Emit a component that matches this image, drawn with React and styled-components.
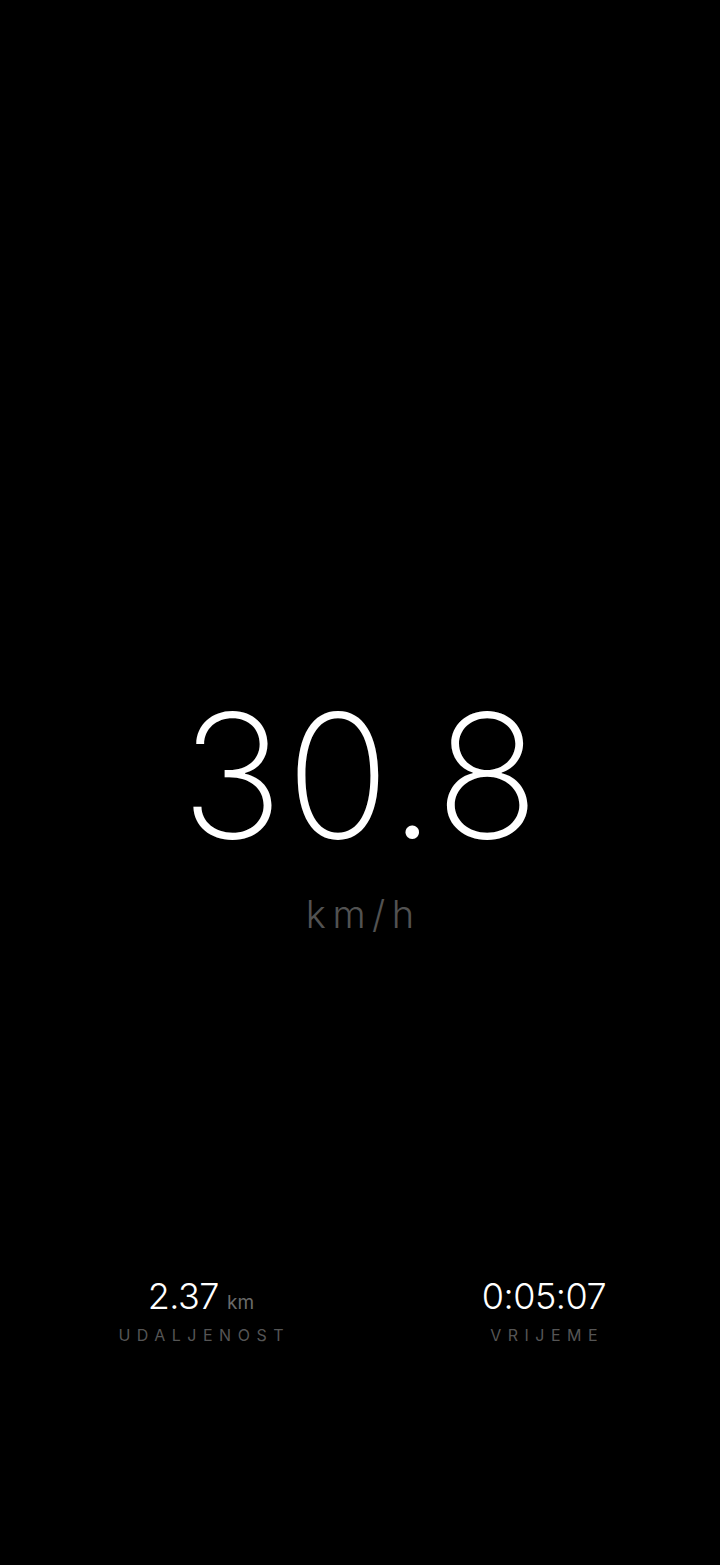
import React from "react";
import styled, { createGlobalStyle } from "styled-components";

const GlobalStyle = createGlobalStyle`
  html, body {
    margin: 0;
    padding: 0;
    background: #000;
  }
  body {
    font-family: "Inter", "Roboto", "Liberation Sans", sans-serif;
    -webkit-font-smoothing: antialiased;
  }
`;

const Screen = styled.div`
  width: 720px;
  height: 1565px;
  background: #000;
  color: #fff;
  display: flex;
  flex-direction: column;
  align-items: stretch;
  box-sizing: border-box;
  padding-top: 689px;
`;

const SpeedBlock = styled.div`
  display: flex;
  flex-direction: column;
  align-items: center;
`;

const Speed = styled.div`
  font-size: 172px;
  line-height: 172px;
  font-weight: 200;
  letter-spacing: 3px;
  padding-left: 3px;
  color: #fff;
`;

const SpeedUnit = styled.div`
  margin-top: 31px;
  font-size: 38px;
  line-height: 44px;
  font-weight: 300;
  letter-spacing: 6.5px;
  padding-left: 6.5px;
  color: #525252;
`;

const Stats = styled.div`
  margin-top: 338px;
  display: flex;
  justify-content: space-around;
  align-items: flex-start;
  padding: 0 18px 0 16px;
`;

const Stat = styled.div`
  display: flex;
  flex-direction: column;
  align-items: center;
`;

const Value = styled.div`
  height: 44px;
  font-size: 36px;
  line-height: 44px;
  font-weight: 300;
  letter-spacing: -0.5px;
  color: #fff;
  white-space: nowrap;
`;

const Unit = styled.span`
  font-size: 19px;
  font-weight: 400;
  letter-spacing: 0;
  color: #6a6a6a;
  margin-left: 8px;
`;

const Label = styled.div`
  margin-top: 7px;
  font-size: 16px;
  line-height: 20px;
  font-weight: 400;
  letter-spacing: 6.5px;
  padding-left: 6.5px;
  color: #555;
`;

export default function App() {
  return (
    <>
      <GlobalStyle />
      <Screen>
        <SpeedBlock>
          <Speed>30.8</Speed>
          <SpeedUnit>km/h</SpeedUnit>
        </SpeedBlock>
        <Stats>
          <Stat>
            <Value>
              2.37<Unit>km</Unit>
            </Value>
            <Label>UDALJENOST</Label>
          </Stat>
          <Stat>
            <Value>0:05:07</Value>
            <Label>VRIJEME</Label>
          </Stat>
        </Stats>
      </Screen>
    </>
  );
}
